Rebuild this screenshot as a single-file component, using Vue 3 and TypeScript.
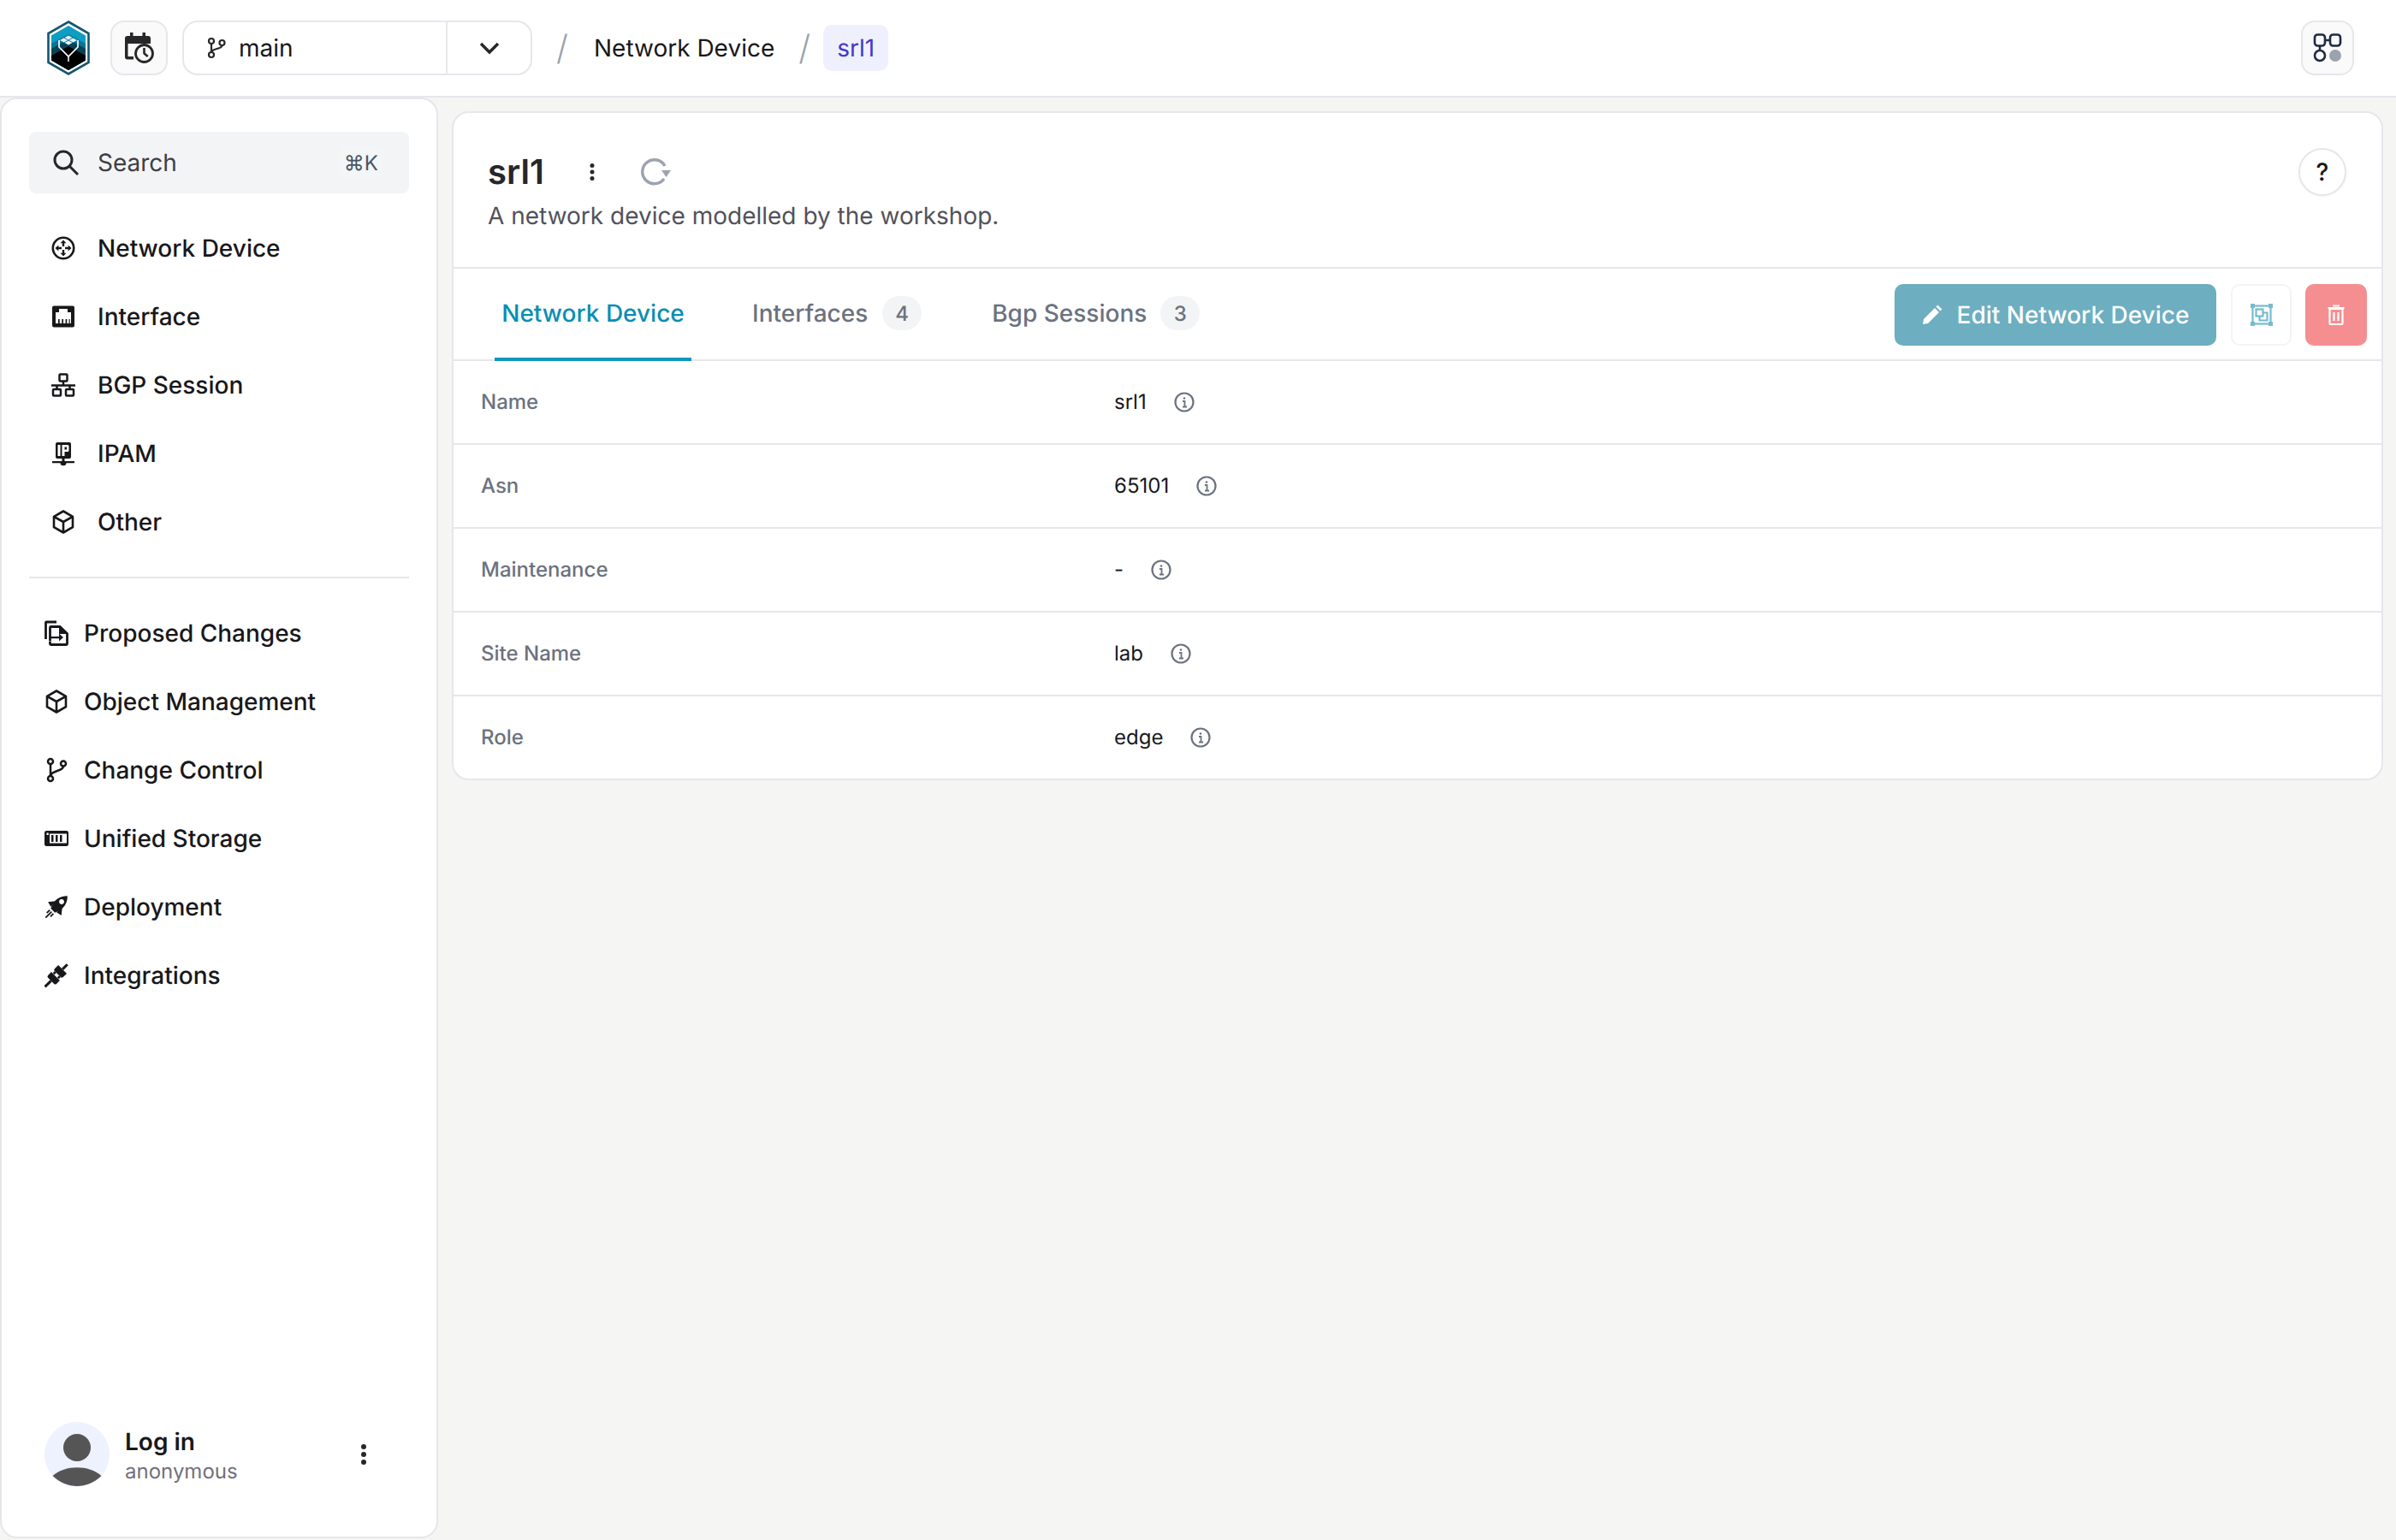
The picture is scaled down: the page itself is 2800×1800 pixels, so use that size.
<script setup lang="ts">
const navTop = [
  { label: 'Network Device', icon: 'router' },
  { label: 'Interface', icon: 'port' },
  { label: 'BGP Session', icon: 'lan' },
  { label: 'IPAM', icon: 'ip' },
  { label: 'Other', icon: 'cube' },
]
const navBottom = [
  { label: 'Proposed Changes', icon: 'proposed' },
  { label: 'Object Management', icon: 'cube' },
  { label: 'Change Control', icon: 'branch' },
  { label: 'Unified Storage', icon: 'storage' },
  { label: 'Deployment', icon: 'rocket' },
  { label: 'Integrations', icon: 'plug' },
]
const rows = [
  { label: 'Name', value: 'srl1' },
  { label: 'Asn', value: '65101' },
  { label: 'Maintenance', value: '-' },
  { label: 'Site Name', value: 'lab' },
  { label: 'Role', value: 'edge' },
]
</script>

<template>
  <div class="page">
    <header class="topbar">
      <svg class="logo" viewBox="0 0 50 64">
        <path d="M25 1.500 L48.500 15 V49 L25 62.500 L1.500 49 V15 Z" fill="#fff" stroke="#14566c" stroke-width="2.600" />
        <path d="M25 6 L45 17.500 V46.500 L25 58 L5 46.500 V17.500 Z" fill="#0f9dc4" />
        <path d="M5 27 L25 16 L45 27 V46.500 L25 58 L5 46.500 Z" fill="#0d7394" />
        <path d="M5 33 L25 22 L45 33 V46.500 L25 58 L5 46.500 Z" fill="#0a4257" />
        <path d="M5 41 L25 30 L45 41 V46.500 L25 58 L5 46.500 Z" fill="#000" />
        <path d="M14 23 V31 L25 42 L36 31 V23" fill="none" stroke="#fff" stroke-width="1.700" />
        <path d="M25 42 V48" fill="none" stroke="#fff" stroke-width="1.500" />
        <path d="M25 17.500 L35 23 L25 28.500 L15 23 Z" fill="#e4f3f7" />
        <path d="M20 20.200 L30 25.800 M30 20.200 L20 25.800" stroke="#0f7fa0" stroke-width="1" />
      </svg>
      <button class="square-btn cal">
        <svg viewBox="0 0 34 36" width="34" height="36">
          <path d="M0 7 a3 3 0 0 1 3-3 h3 V0 h3.500 v4 h11 V0 H24 v4 h3 a3 3 0 0 1 3 3 v6 H3.500 v15 H10 v3.500 H3 a3 3 0 0 1-3-3 Z" fill="#27272a" />
          <circle cx="22.500" cy="24.500" r="10" fill="#fafafa" stroke="#27272a" stroke-width="2.800" />
          <path d="M22.500 18 V24.500 l4.200 3.500" fill="none" stroke="#27272a" stroke-width="2.600" />
        </svg>
      </button>
      <div class="branch">
        <div class="branch-main">
          <svg viewBox="0 0 20 24" width="20" height="24" fill="none" stroke="#27272a" stroke-width="2.200">
            <circle cx="4" cy="4" r="3" /><circle cx="4" cy="20" r="3" /><circle cx="16.500" cy="6" r="3" />
            <path d="M4 7 V17 M16.500 9 C16.500 14 5 12 4 17" />
          </svg>
          <span>main</span>
        </div>
        <div class="branch-caret">
          <svg viewBox="0 0 24 14" width="24" height="14" fill="none" stroke="#27272a" stroke-width="3.400">
            <path d="M2 2 L12 12 L22 2" />
          </svg>
        </div>
      </div>
      <span class="slash first">/</span>
      <span class="crumb">Network Device</span>
      <span class="slash second">/</span>
      <span class="crumb-chip">srl1</span>
      <div class="grow"></div>
      <button class="square-btn apps">
        <svg viewBox="0 0 34 34" width="34" height="34" fill="none" stroke="#1f2a44" stroke-width="2.600">
          <rect x="2" y="1.500" width="12" height="13" rx="3.500" />
          <rect x="20" y="1.500" width="12" height="13" rx="3.500" />
          <circle cx="8" cy="26" r="6" />
          <path d="M14 8 H20 M8 14.500 V20" />
          <circle cx="26" cy="26" r="7" fill="#9ca3af" stroke="none" />
        </svg>
      </button>
    </header>

    <div class="body">
      <aside class="sidebar">
        <div class="search">
          <svg viewBox="0 0 30 30" width="30" height="30" fill="none" stroke="#27272a" stroke-width="3">
            <circle cx="12" cy="12" r="10" /><path d="M19 19 L29 29" />
          </svg>
          <span class="search-text">Search</span>
          <span class="kbd">⌘K</span>
        </div>

        <nav class="nav nav-top">
          <a v-for="item in navTop" :key="item.label" class="nav-item">
            <svg class="nav-icon" viewBox="0 0 28 28">
              <template v-if="item.icon === 'router'">
                <circle cx="14" cy="14" r="12.200" fill="none" stroke="#18181b" stroke-width="2.600" />
                <path d="M14 4.500 l3.500 3.800 h-2.300 v3.700 h-2.400 V8.300 h-2.300 Z M14 23.500 l-3.500-3.800 h2.300 V16 h2.400 v3.700 h2.300 Z M4.500 14 l3.800-3.500 v2.300 H12 v2.400 H8.300 v2.300 Z M23.500 14 l-3.800 3.500 v-2.300 H16 v-2.400 h3.700 v-2.300 Z" fill="#18181b" />
              </template>
              <template v-else-if="item.icon === 'port'">
                <path d="M3 1.500 h22 a2 2 0 0 1 2 2 v21 a2 2 0 0 1-2 2 H3 a2 2 0 0 1-2-2 v-21 a2 2 0 0 1 2-2 Z M9 5 v4 H5 v13 h18 V9 h-4 V5 Z" fill="#18181b" fill-rule="evenodd" />
                <path d="M8 17 h1.700 v5 H8 Z M12.300 17 H14 v5 h-1.700 Z M16.600 17 h1.700 v5 h-1.700 Z M20.500 17 h1.200 v5 h-1.200 Z" fill="#18181b" />
              </template>
              <template v-else-if="item.icon === 'lan'">
                <g fill="none" stroke="#18181b" stroke-width="2.500">
                  <rect x="9.500" y="1.500" width="9" height="8" rx="1" />
                  <rect x="2" y="19" width="9" height="7.500" rx="1" />
                  <rect x="17" y="19" width="9" height="7.500" rx="1" />
                  <path d="M14 9.500 V14.500 M0 14.500 H28 M6.500 14.500 V19 M21.500 14.500 V19" />
                </g>
              </template>
              <template v-else-if="item.icon === 'ip'">
                <path d="M7 1 h14 a2 2 0 0 1 2 2 v15 a2 2 0 0 1-2 2 H15.500 v3 H27 v2.200 H17.500 a3.500 3 0 0 1-7 0 H1 V23 H12.500 v-3 H7 a2 2 0 0 1-2-2 V3 a2 2 0 0 1 2-2 Z M7.500 4 v13 h3 V4 Z M12.500 4 v13 h3 v-5 h3.500 a1.500 1.500 0 0 0 1.500-1.500 V5.500 A1.500 1.500 0 0 0 19 4 Z M15.500 6.500 h2.500 v3 h-2.500 Z" fill="#18181b" fill-rule="evenodd" />
              </template>
              <template v-else>
                <path d="M14 1.500 L25 7.800 V20.200 L14 26.500 L3 20.200 V7.800 Z M3 7.800 L14 14 L25 7.800 M14 14 V26.500" fill="none" stroke="#18181b" stroke-width="2.600" stroke-linejoin="round" />
              </template>
            </svg>
            <span>{{ item.label }}</span>
          </a>
        </nav>

        <div class="sep"></div>

        <nav class="nav nav-bottom">
          <a v-for="item in navBottom" :key="item.label" class="nav-item">
            <svg class="nav-icon" viewBox="0 0 28 28">
              <template v-if="item.icon === 'proposed'">
                <path d="M1.500 21 V2.500 A1 1 0 0 1 2.500 1 H14 M6.500 23.500 V7.500 A1 1 0 0 1 7.500 6.500 H18 L26.500 14.500 V26.500 A1 1 0 0 1 25.500 27.500 H7.500 A1 1 0 0 1 6.500 26.500 V24" fill="none" stroke="#18181b" stroke-width="2.800" />
                <path d="M17 6.500 L26.500 15 H17 Z" fill="#18181b" />
                <path d="M5.500 18 H17 V14.500 L22 19 L17 23.500 V20.300 H5.500 Z" fill="#18181b" />
              </template>
              <template v-else-if="item.icon === 'cube'">
                <path d="M14 1.500 L25 7.800 V20.200 L14 26.500 L3 20.200 V7.800 Z M3 7.800 L14 14 L25 7.800 M14 14 V26.500" fill="none" stroke="#18181b" stroke-width="2.600" stroke-linejoin="round" />
              </template>
              <template v-else-if="item.icon === 'branch'">
                <g fill="none" stroke="#18181b" stroke-width="2.500">
                  <circle cx="7" cy="4" r="3" /><circle cx="7" cy="24" r="3" /><circle cx="22" cy="6.500" r="3" />
                  <path d="M7 7 V21 M22 9.500 C22 16 8 14 7 21" />
                </g>
              </template>
              <template v-else-if="item.icon === 'storage'">
                <path d="M2.500 5 h23 A2.500 2.500 0 0 1 28 7.500 v13 A2.500 2.500 0 0 1 25.500 23 h-23 A2.500 2.500 0 0 1 0 20.500 v-13 A2.500 2.500 0 0 1 2.500 5 Z M6 8.500 v11 h20 v-11 Z M2.500 7.500 v2.500 h2.200 V7.500 Z" fill="#18181b" fill-rule="evenodd" />
                <path d="M8 10 h2.500 v8 H8 Z M13 10 h2.500 v8 H13 Z M18 10 h2.500 v8 H18 Z" fill="#18181b" />
              </template>
              <template v-else-if="item.icon === 'rocket'">
                <g transform="rotate(45 14 14)" fill="#18181b">
                  <path d="M14 -4 C19.500 1 21 8 19.500 14 L17.500 20 H10.500 L8.500 14 C7 8 8.500 1 14 -4 Z M14 2.500 a3 3 0 1 0 .01 0 Z" fill-rule="evenodd" />
                  <path d="M8.500 10 L3 17 L9.500 18.500 Z M19.500 10 L25 17 L18.500 18.500 Z" />
                  <path d="M11 22 V27 M14 22 V32 M17 22 V27" stroke="#18181b" stroke-width="1.800" />
                </g>
              </template>
              <template v-else>
                <g transform="rotate(45 14 14)" fill="#18181b">
                  <path d="M7 4 H21 V10 a2 2 0 0 1-2 2 H9 a2 2 0 0 1-2-2 Z" />
                  <path d="M12.500 -4 H15.500 V4 H12.500 Z M9 12 h2.800 v3 H9 Z M16.200 12 H19 v3 h-2.800 Z" />
                  <path d="M7 15.500 H21 V21 a2 2 0 0 1-2 2 H9 a2 2 0 0 1-2-2 Z" />
                  <path d="M12.500 23 H15.500 V33 H12.500 Z" />
                </g>
              </template>
            </svg>
            <span>{{ item.label }}</span>
          </a>
        </nav>

        <div class="grow"></div>

        <div class="user">
          <div class="avatar">
            <svg viewBox="0 0 76 76" width="76" height="76">
              <circle cx="38" cy="38" r="38" fill="#edf2fe" />
              <circle cx="38" cy="30" r="16" fill="#555" />
              <path d="M9.500 63 C24 50 52 50 66.500 63 C50 79 26 79 9.500 63 Z" fill="#555" />
            </svg>
          </div>
          <div class="user-text">
            <div class="user-name">Log in</div>
            <div class="user-sub">anonymous</div>
          </div>
          <svg class="kebab" viewBox="0 0 8 24" width="8" height="24" fill="#27272a">
            <circle cx="4" cy="3" r="3" /><circle cx="4" cy="12" r="3" /><circle cx="4" cy="21" r="3" />
          </svg>
        </div>
      </aside>

      <main class="main">
        <section class="card">
          <div class="head">
            <div class="head-left">
              <div class="title-row">
                <h1>srl1</h1>
                <svg class="title-kebab" viewBox="0 0 6 20" width="6" height="20" fill="#27272a">
                  <circle cx="3" cy="2.500" r="2.500" /><circle cx="3" cy="10" r="2.500" /><circle cx="3" cy="17.500" r="2.500" />
                </svg>
                <svg class="refresh" viewBox="0 0 36 32" width="36" height="32" fill="none" stroke="#9ca3af" stroke-width="3.400">
                  <path d="M27 24 A14 14 0 1 1 28 9" />
                  <path d="M24 14 H35 L29.500 22 Z" fill="#9ca3af" stroke="none" />
                </svg>
              </div>
              <p>A network device modelled by the workshop.</p>
            </div>
            <button class="help">?</button>
          </div>

          <div class="tabs">
            <div class="tab active">Network Device</div>
            <div class="tab">Interfaces <span class="badge">4</span></div>
            <div class="tab">Bgp Sessions <span class="badge">3</span></div>
            <div class="grow"></div>
            <button class="edit">
              <svg viewBox="0 0 24 24" width="24" height="24" fill="#fff">
                <path d="M1 23 L2 17 L15 4 L20 9 L7 22 Z M16.500 2.500 L18.500 0.500 L23.500 5.500 L21.500 7.500 Z" />
              </svg>
              Edit Network Device
            </button>
            <button class="icon-btn">
              <svg viewBox="0 0 26 26" width="26" height="26" fill="none" stroke="#76bccf" stroke-width="2.200">
                <rect x="2.500" y="2.500" width="21" height="21" />
                <rect x="6.500" y="6.500" width="8" height="8" />
                <path d="M14.500 10.500 H19.500 V19.500 H10.500 V14.500" />
                <rect x="0" y="0" width="5" height="5" fill="#76bccf" stroke="none" />
                <rect x="21" y="0" width="5" height="5" fill="#76bccf" stroke="none" />
                <rect x="0" y="21" width="5" height="5" fill="#76bccf" stroke="none" />
                <rect x="21" y="21" width="5" height="5" fill="#76bccf" stroke="none" />
              </svg>
            </button>
            <button class="del-btn">
              <svg viewBox="0 0 20 24" width="20" height="24" fill="none" stroke="#fff" stroke-width="2.200">
                <path d="M2.500 5 H17.500 V21.500 a1.500 1.500 0 0 1-1.500 1.500 H4 a1.500 1.500 0 0 1-1.500-1.500 Z M0.500 4 H19.500 M6 1.500 H14 M7.500 9 V19 M12.500 9 V19" />
              </svg>
            </button>
          </div>

          <div v-for="row in rows" :key="row.label" class="row">
            <div class="row-label">{{ row.label }}</div>
            <div class="row-value">
              <span>{{ row.value }}</span>
              <svg viewBox="0 0 24 24" width="24" height="24" fill="none" stroke="#6b7280" stroke-width="2.200">
                <circle cx="12" cy="12" r="10.500" />
                <path d="M10 11 H12.500 V17.500 M10 17.500 H15" stroke-width="1.800" />
                <circle cx="12" cy="7.500" r="1.300" fill="#6b7280" stroke="none" />
              </svg>
            </div>
          </div>
        </section>
      </main>
    </div>
  </div>
</template>

<style>
html, body { margin: 0; background: #f5f5f4; }
</style>

<style scoped>
* { box-sizing: border-box; }
.page {
  width: 2800px;
  height: 1800px;
  display: flex;
  flex-direction: column;
  font-family: Inter, "Liberation Sans", sans-serif;
  font-size: 28px;
  font-variation-settings: "opsz" 14;
  text-rendering: geometricPrecision;
  color: #18181b;
  background: #f5f5f4;
  overflow: hidden;
}
.grow { flex: 1; }
button { font-family: inherit; font-variation-settings: inherit; text-rendering: inherit; padding: 0; cursor: pointer; }
svg { overflow: visible; }

.topbar {
  height: 114px;
  flex: none;
  background: #fff;
  border-bottom: 2px solid #e5e7eb;
  display: flex;
  align-items: center;
  padding: 0 49px 0 55px;
}
.logo { width: 50px; height: 64px; flex: none; }
.square-btn {
  height: 64px;
  border: 2px solid #e5e7eb;
  border-radius: 16px;
  background: #fafafa;
  display: flex;
  align-items: center;
  justify-content: center;
}
.cal { width: 67px; margin-left: 24px; }
.apps { width: 62px; }
.branch {
  width: 409px;
  height: 64px;
  margin-left: 17px;
  border: 2px solid #e5e7eb;
  border-radius: 18px;
  display: flex;
  background: #fff;
}
.branch-main {
  width: 308px;
  border-right: 2px solid #e5e7eb;
  display: flex;
  align-items: center;
  gap: 16px;
  padding-left: 28px;
}
.branch-caret { flex: 1; display: flex; align-items: center; justify-content: center; }
.slash { color: #9ca3af; font-size: 40px; font-weight: 300; line-height: 1; width: 16px; }
.slash.first { margin-left: 28px; }
.crumb { margin-left: 28px; }
.slash.second { margin-left: 28px; }
.crumb-chip {
  margin-left: 13px;
  height: 54px;
  padding: 0 16px;
  border-radius: 10px;
  background: #eef0fd;
  color: #4338ca;
  display: flex;
  align-items: center;
}

.body { flex: 1; display: flex; min-height: 0; }
.sidebar {
  width: 512px;
  height: 1684px;
  flex: none;
  background: #fff;
  border: 2px solid #e5e7eb;
  border-radius: 20px;
  padding: 38px 32px 0 32px;
  display: flex;
  flex-direction: column;
}
.search {
  width: 444px;
  height: 72px;
  flex: none;
  background: #f3f4f6;
  border-radius: 8px;
  display: flex;
  align-items: center;
  padding: 0 30px 0 28px;
  gap: 22px;
}
.search-text { flex: 1; color: #3f3f46; }
.kbd { font-size: 24px; color: #4b5563; background: #f4f5f7; padding: 4px 6px; border-radius: 6px; }
.nav { display: flex; flex-direction: column; }
.nav-item { height: 80px; display: flex; align-items: center; color: #18181b; font-weight: 500; }
.nav-icon { width: 28px; height: 28px; flex: none; }
.nav-top { margin-top: 24px; padding-left: 26px; }
.nav-top .nav-item { gap: 26px; }
.sep { height: 2px; background: #e5e7eb; margin-top: 24px; flex: none; }
.nav-bottom { margin-top: 24px; padding-left: 18px; }
.nav-bottom .nav-item { gap: 18px; }
.user { display: flex; align-items: center; padding: 0 0 58px 18px; }
.avatar { width: 76px; height: 76px; flex: none; }
.user-text { margin-left: 18px; flex: 1; padding-top: 2px; }
.user-name { font-weight: 600; line-height: 38px; }
.user-sub { font-size: 24px; color: #71717a; line-height: 32px; }
.kebab { margin-right: 49px; }

.main { flex: 1; padding: 16px 15px 0 16px; min-width: 0; }
.card {
  background: #fff;
  border: 2px solid #e5e7eb;
  border-radius: 20px;
  display: flex;
  flex-direction: column;
}
.head {
  height: 182px;
  flex: none;
  display: flex;
  justify-content: space-between;
  padding: 0 41px 0 40px;
  border-bottom: 2px solid #e5e7eb;
}
.title-row { display: flex; align-items: center; height: 60px; margin-top: 39px; }
h1 { margin: 0; font-size: 40px; font-weight: 600; color: #27272a; line-height: 60px; }
.title-kebab { margin-left: 53px; }
.refresh { margin-left: 54px; }
.head-left p { margin: 1px 0 0; color: #52525b; line-height: 40px; }
.help {
  width: 56px;
  height: 56px;
  margin-top: 41px;
  border: 2px solid #e5e7eb;
  border-radius: 50%;
  background: #fff;
  color: #18181b;
  font-size: 28px;
  font-weight: 500;
  box-shadow: 0 1px 2px rgba(0,0,0,.05);
}
.tabs {
  height: 108px;
  flex: none;
  display: flex;
  align-items: flex-start;
  padding-right: 17px;
  border-bottom: 2px solid #e5e7eb;
}
.tab {
  height: 108px;
  padding: 0 8px;
  display: flex;
  align-items: center;
  gap: 16px;
  color: #6b7280;
  font-weight: 500;
  border-bottom: 4px solid transparent;
}
.tab:nth-child(1) { margin-left: 48px; width: 230px; justify-content: center; }
.tab:nth-child(2) { margin-left: 63px; gap: 17px; }
.tab:nth-child(3) { margin-left: 66px; }
.tab.active {
  color: #0a8eb4;
  border-bottom-color: #0f97bd;
}
.badge {
  width: 46px;
  height: 40px;
  border-radius: 20px;
  background: #f3f4f6;
  font-size: 24px;
  display: flex;
  align-items: center;
  justify-content: center;
}
.edit {
  width: 376px;
  height: 72px;
  margin-top: 18px;
  border: 0;
  border-radius: 10px;
  background: #6daec0;
  color: #fff;
  font-size: 28px;
  font-weight: 500;
  display: flex;
  align-items: center;
  justify-content: center;
  gap: 17px;
}
.icon-btn, .del-btn {
  height: 72px;
  margin-top: 18px;
  border-radius: 10px;
  display: flex;
  align-items: center;
  justify-content: center;
}
.icon-btn { width: 71px; margin-left: 17px; background: #fff; border: 2px solid #f3f4f6; }
.del-btn { width: 72px; margin-left: 16px; background: #f58e90; border: 0; }
.row {
  height: 98px;
  display: flex;
  align-items: center;
  border-bottom: 2px solid #e5e7eb;
  font-size: 24px;
  padding-bottom: 1px;
}
.row:last-child { border-bottom: 0; height: 96px; }
.row-label { width: 772px; padding-left: 32px; color: #6b7280; font-weight: 500; }
.row-value { display: flex; align-items: center; gap: 32px; color: #18181b; }
</style>
